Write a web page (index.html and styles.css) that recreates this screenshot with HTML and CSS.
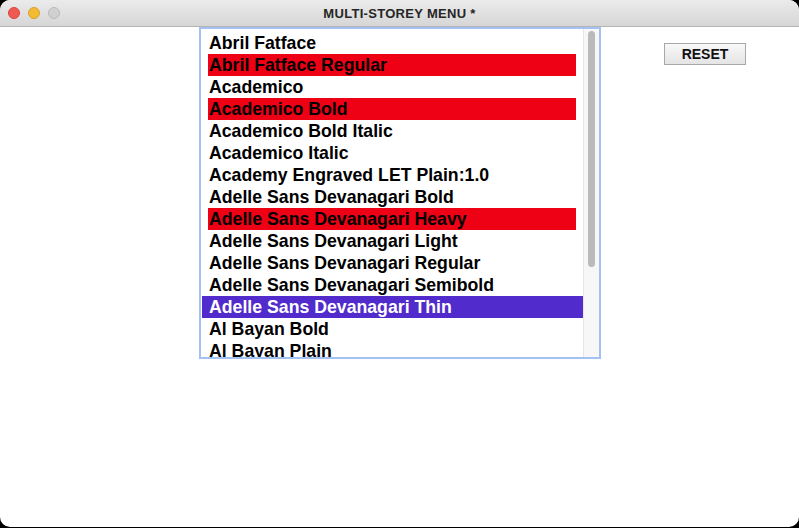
FILE: index.html
```html
<!DOCTYPE html>
<html>
<head>
<meta charset="utf-8">
<link rel="stylesheet" href="styles.css">
</head>
<body>
<div class="window">
  <div class="titlebar">
    <div class="lights">
      <span class="light red"></span>
      <span class="light yellow"></span>
      <span class="light grey"></span>
    </div>
    <div class="title">MULTI-STOREY MENU *</div>
  </div>
  <div class="content">
    <div class="listbox">
      <div class="rows">
        <div class="row">Abril Fatface</div>
        <div class="row hl">Abril Fatface Regular</div>
        <div class="row">Academico</div>
        <div class="row hl">Academico Bold</div>
        <div class="row">Academico Bold Italic</div>
        <div class="row">Academico Italic</div>
        <div class="row">Academy Engraved LET Plain:1.0</div>
        <div class="row">Adelle Sans Devanagari Bold</div>
        <div class="row hl">Adelle Sans Devanagari Heavy</div>
        <div class="row">Adelle Sans Devanagari Light</div>
        <div class="row">Adelle Sans Devanagari Regular</div>
        <div class="row">Adelle Sans Devanagari Semibold</div>
        <div class="row sel">Adelle Sans Devanagari Thin</div>
        <div class="row">Al Bayan Bold</div>
        <div class="row">Al Bayan Plain</div>
      </div>
      <div class="scrollbar"><div class="thumb"></div></div>
    </div>
    <button class="reset">RESET</button>
  </div>
</div>
</body>
</html>
```

FILE: styles.css
```css
html, body {
  margin: 0;
  padding: 0;
  background: #000;
  width: 799px;
  height: 528px;
  overflow: hidden;
}
.window {
  width: 799px;
  height: 527px;
  background: #fff;
  border-radius: 10px;
  overflow: hidden;
  display: flex;
  flex-direction: column;
  font-family: "Liberation Sans", Arial, sans-serif;
}
.titlebar {
  height: 26px;
  border-bottom: 1px solid #b4b4b4;
  background: linear-gradient(#ebebeb, #d6d6d6);
  display: flex;
  align-items: center;
  position: relative;
}
.lights {
  display: flex;
  gap: 8px;
  padding-left: 8px;
}
.light {
  width: 12px;
  height: 12px;
  border-radius: 50%;
  box-sizing: border-box;
}
.light.red { background: #ee5a52; border: 1px solid #d9463f; }
.light.yellow { background: #f1bb33; border: 1px solid #d9a12a; }
.light.grey { background: #d0d0d0; border: 1px solid #b9b9b9; }
.title {
  position: absolute;
  left: 0;
  right: 0;
  text-align: center;
  font-size: 13px;
  font-weight: bold;
  color: #262626;
  letter-spacing: 0.3px;
}
.content {
  flex: 1;
  display: flex;
  align-items: flex-start;
  padding-left: 199px;
}
.listbox {
  width: 398px;
  height: 328px;
  border: 2px solid #a3c1f2;
  display: flex;
  background: #fff;
  overflow: hidden;
  box-sizing: content-box;
}
.rows {
  width: 382px;
  padding-top: 3px;
  padding-left: 1px;
  overflow: hidden;
}
.row {
  height: 22px;
  line-height: 22px;
  font-size: 17.7px;
  font-weight: bold;
  color: #000;
  padding-left: 1px;
  margin-left: 6px;
  margin-right: 7px;
  white-space: nowrap;
}
.row.hl {
  background: #ee0015;
}
.row.sel {
  background: #512bcb;
  color: #fff;
  margin-left: 0;
  margin-right: 0;
  padding-left: 7px;
}
.scrollbar {
  width: 15px;
  background: #f7f7f7;
  border-left: 1px solid #e6e6e6;
  padding-top: 2px;
  display: flex;
  justify-content: center;
}
.thumb {
  width: 7px;
  height: 236px;
  background: #bababa;
  border-radius: 4px;
}
.reset {
  margin-left: 63px;
  margin-top: 16px;
  width: 82px;
  height: 22px;
  border: 1px solid #a8a8a8;
  background: linear-gradient(#f8f8f8, #e4e4e4);
  font-family: "Liberation Sans", Arial, sans-serif;
  font-weight: bold;
  font-size: 14px;
  color: #111;
  padding: 0;
}
```
